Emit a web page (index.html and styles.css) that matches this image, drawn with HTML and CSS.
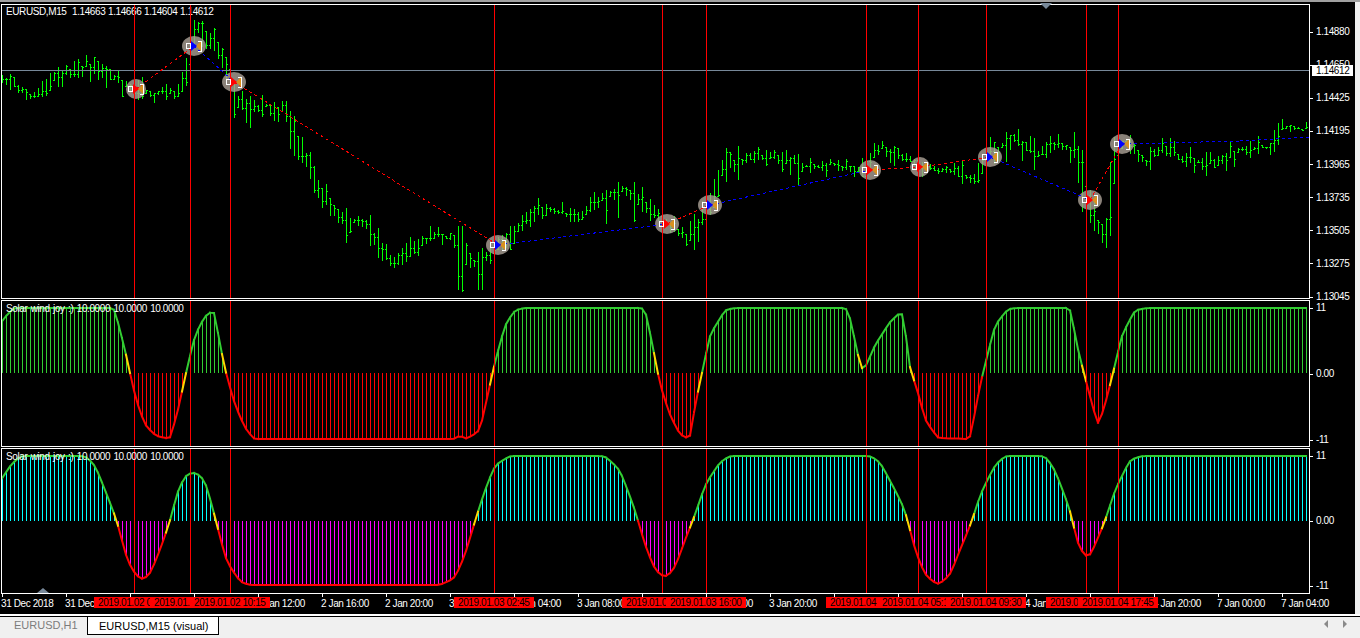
FILE: index.html
```html
<!DOCTYPE html>
<html lang="en">
<head>
<meta charset="utf-8">
<title>EURUSD,M15 (visual)</title>
<link rel="stylesheet" href="styles.css">
</head>
<body>
<div class="strip"></div>
<main class="terminal">
  <span class="shift shift-top"></span>
  <div class="row row-main">
    <section class="pane pane-main">
      <div class="legend"><span class="symbol">EURUSD,M15</span><span class="ohlc">1.14663</span><span class="ohlc">1.14666</span><span class="ohlc">1.14604</span><span class="ohlc">1.14612</span></div>
      <svg id="price" viewBox="2 5 1307 293" width="1307" height="293"></svg>
    </section>
    <div class="axis axis-main">
      <span class="tick">1.14880</span><span class="tick">1.14650</span><span class="tick">1.14425</span><span class="tick">1.14195</span><span class="tick">1.13965</span><span class="tick">1.13735</span><span class="tick">1.13505</span><span class="tick">1.13275</span><span class="tick">1.13045</span>
      <span class="price-tag">1.14612</span>
    </div>
  </div>
  <div class="row row-ind1">
    <section class="pane pane-ind1">
      <svg id="ind1" viewBox="2 301 1307 145" width="1307" height="145"></svg>
      <div class="legend">Solar wind joy :) 10.0000 10.0000 10.0000</div>
    </section>
    <div class="axis axis-ind1"><span class="tick">11</span><span class="tick">0.00</span><span class="tick">-11</span></div>
  </div>
  <div class="row row-ind2">
    <section class="pane pane-ind2">
      <svg id="ind2" viewBox="2 449 1307 144" width="1307" height="144"></svg>
      <div class="legend">Solar wind joy :) 10.0000 10.0000 10.0000</div>
    </section>
    <div class="axis axis-ind2"><span class="tick">11</span><span class="tick">0.00</span><span class="tick">-11</span></div>
  </div>
  <span class="shift shift-bottom"></span>
  <div class="timeline">
    <span class="time">31 Dec 2018</span><span class="time">31 Dec 20:00</span><span class="time">2 Jan 04:00</span><span class="time">2 Jan 08:00</span><span class="time">2 Jan 12:00</span><span class="time">2 Jan 16:00</span><span class="time">2 Jan 20:00</span><span class="time">3 Jan 00:00</span><span class="time">3 Jan 04:00</span><span class="time">3 Jan 08:00</span><span class="time">3 Jan 12:00</span><span class="time">3 Jan 16:00</span><span class="time">3 Jan 20:00</span><span class="time">4 Jan 00:00</span><span class="time">4 Jan 04:00</span><span class="time">4 Jan 08:00</span><span class="time">4 Jan 12:00</span><span class="time">4 Jan 16:00</span><span class="time">4 Jan 20:00</span><span class="time">7 Jan 00:00</span><span class="time">7 Jan 04:00</span>
    <span class="flag f134">2019.01.02 04:15</span>
    <span class="flag f190">2019.01.02 07:45</span>
    <span class="flag f230">2019.01.02 10:15</span>
    <span class="flag f494">2019.01.03 02:45</span>
    <span class="flag f662">2019.01.03 13:15</span>
    <span class="flag f706">2019.01.03 16:00</span>
    <span class="flag f866">2019.01.04 02:00</span>
    <span class="flag f918">2019.01.04 05:15</span>
    <span class="flag f986">2019.01.04 09:30</span>
    <span class="flag f1086">2019.01.04 15:45</span>
    <span class="flag f1118">2019.01.04 17:45</span>
  </div>
</main>
<nav class="tabs">
  <span class="tab">EURUSD,H1</span>
  <span class="tab tab-active">EURUSD,M15 (visual)</span>
  <span class="scroll scroll-left"></span>
  <span class="scroll scroll-right"></span>
</nav>
<script src="chart.js"></script>
</body>
</html>
```
FILE: styles.css
```css
* { box-sizing: border-box; }
html, body { margin: 0; padding: 0; }
body {
  width: 1360px;
  height: 638px;
  overflow: hidden;
  background: #f0f0f0;
  font-family: "Liberation Sans", Arial, sans-serif;
  font-size: 10px;
  letter-spacing: -0.4px;
  color: #fff;
}
.strip { height: 2px; background: #a0a0a0; }
.terminal {
  position: relative;
  width: 1355px;
  height: 612px;
  padding: 2px 0 0 1px;
  background: #000;
  overflow: hidden;
}
.row { display: flex; }
.row-ind1 { margin-top: 1px; }
.row-ind2 { margin-top: 1px; }
.pane {
  position: relative;
  width: 1309px;
  border: 1px solid #fff;
  flex: none;
}
.pane svg { position: relative; display: block; }
.pane-main { height: 295px; }
.pane-ind1 { height: 147px; }
.pane-ind2 { height: 146px; }
.legend {
  position: absolute;
  left: 4px;
  top: 2px;
  line-height: 12px;
  white-space: nowrap;
  word-spacing: 1px;
}
.pane-main .legend { top: 1px; }
.symbol { display: inline-block; width: 66px; }
.ohlc { display: inline-block; width: 36px; }
.axis {
  position: relative;
  display: flex;
  flex-direction: column;
  justify-content: space-between;
  flex: none;
  width: 44px;
}
.axis-main { height: 300px; margin-bottom: -6px; padding-top: 21px; }
.axis-ind1 { height: 147px; padding-top: 1px; }
.axis-ind2 { height: 146px; padding: 1px 0; }
.tick {
  display: flex;
  align-items: center;
  height: 14px;
  line-height: 14px;
}
.tick::before {
  content: "";
  width: 3px;
  height: 1px;
  margin: 0 3px 0 0;
  background: #fff;
}
.price-tag {
  position: absolute;
  left: 2px;
  top: 61px;
  width: 41px;
  height: 11px;
  line-height: 11px;
  padding-left: 4px;
  background: #fff;
  color: #000;
}
.shift { position: absolute; width: 0; height: 0; border-style: solid; border-color: transparent; }
.shift-top {
  left: 1040px;
  top: 1px;
  border-width: 6px 6px 0;
  border-top-color: #778899;
  z-index: 2;
}
.shift-bottom {
  left: 37px;
  top: 586px;
  border-width: 0 6px 5px;
  border-bottom-color: #778899;
  z-index: 2;
}
.timeline {
  position: relative;
  display: grid;
  grid-template-columns: repeat(21, 64px);
  width: 1353px;
  height: 19px;
  margin-left: 0;
}
.time {
  position: relative;
  padding: 3px 0 0 0;
  line-height: 14px;
  white-space: nowrap;
}
.time::before {
  content: "";
  position: absolute;
  left: 1px;
  top: 0;
  width: 1px;
  height: 3px;
  background: #fff;
}
.flag {
  position: absolute;
  top: 3px;
  width: 80px;
  height: 11px;
  padding-left: 4px;
  line-height: 11px;
  background: #f00;
  color: #000;
  overflow: hidden;
  white-space: nowrap;
}
.f134 { left: 93px; }
.f190 { left: 149px; }
.f230 { left: 189px; }
.f494 { left: 453px; }
.f662 { left: 621px; }
.f706 { left: 665px; }
.f866 { left: 825px; }
.f918 { left: 877px; }
.f986 { left: 945px; }
.f1086 { left: 1045px; }
.f1118 { left: 1077px; }
.tabs {
  position: relative;
  display: flex;
  align-items: flex-start;
  height: 24px;
  border-top: 2px solid #fff;
  font-size: 11px;
  letter-spacing: 0;
}
.tabs::before {
  content: "";
  position: absolute;
  left: 0;
  right: 0;
  top: 0;
  height: 1px;
  background: #000;
}
.tab {
  height: 18px;
  padding: 0 0 0 14px;
  width: 87px;
  line-height: 19px;
  color: #7c7c7c;
}
.tab-active {
  position: relative;
  width: 132px;
  height: 19px;
  padding-left: 11px;
  background: #fff;
  color: #000;
  border: 1px solid #000;
}
.scroll {
  width: 0;
  height: 0;
  margin-top: 4px;
  border-style: solid;
  border-color: transparent;
}
.scroll-left {
  margin-left: 1105px;
  border-width: 4px 4px 4px 0;
  border-right-color: #8a8a8a;
}
.scroll-right {
  margin-left: 15px;
  border-width: 4px 0 4px 4px;
  border-left-color: #8a8a8a;
}
```
FILE: chart.js
```js
(function () {
  var NS = 'http://www.w3.org/2000/svg';
  var LINES = [134, 190, 230, 494, 662, 706, 866, 918, 986, 1086, 1118];

  function add(svg, tag, attrs) {
    var el = document.createElementNS(NS, tag);
    for (var k in attrs) el.setAttribute(k, attrs[k]);
    svg.appendChild(el);
    return el;
  }
  function interp(pts, x) {
    if (x <= pts[0][0]) return pts[0][1];
    for (var i = 1; i < pts.length; i++) {
      if (x <= pts[i][0]) {
        var a = pts[i - 1], b = pts[i];
        return a[1] + (b[1] - a[1]) * (x - a[0]) / (b[0] - a[0]);
      }
    }
    return pts[pts.length - 1][1];
  }
  function rng(seed) {
    return function () {
      seed |= 0; seed = seed + 0x6D2B79F5 | 0;
      var t = Math.imul(seed ^ seed >>> 15, 1 | seed);
      t = t + Math.imul(t ^ t >>> 7, 61 | t) ^ t;
      return ((t ^ t >>> 14) >>> 0) / 4294967296;
    };
  }
  function redLines(svg, y0, y1) {
    var d = '';
    LINES.forEach(function (x) { d += 'M' + x + ' ' + y0 + 'h1V' + y1 + 'h-1z'; });
    add(svg, 'path', { d: d, fill: '#f00', 'shape-rendering': 'crispEdges' });
  }

  /* ---------- price pane ---------- */
  var path = [[2,82],[12,86],[22,90],[30,95],[42,90],[52,78],[62,74],[72,72],[86,65],[100,73],[115,81],[125,85],[135,90],[146,95],[160,93],[178,92],[184,76],[188,62],[192,34],[197,28],[205,32],[215,42],[224,60],[229,78],[236,100],[250,112],[265,106],[285,108],[295,140],[300,152],[312,172],[316,188],[330,205],[345,220],[365,225],[380,245],[390,258],[402,263],[415,245],[430,238],[450,237],[460,252],[470,265],[482,258],[500,240],[520,225],[538,205],[560,212],[578,217],[600,197],[620,186],[640,197],[655,215],[670,226],[690,235],[708,210],[722,170],[745,160],[770,153],[790,165],[800,165],[830,165],[860,170],[880,148],[900,155],[920,165],[950,172],[975,178],[990,150],[1015,140],[1035,155],[1055,143],[1075,150],[1082,185],[1095,220],[1108,232],[1112,165],[1118,148],[1125,142],[1145,160],[1165,148],[1185,160],[1215,162],[1240,148],[1270,145],[1280,128],[1308,129]];
  /* single long bars that stand out in the reference */
  var SPIKES = { 182:[72,92], 186:[58,86], 194:[20,46], 294:[116,156], 234:[84,118], 250:[96,128], 346:[208,243], 378:[228,258],
    458:[226,290], 462:[226,292], 478:[252,290], 482:[248,290], 510:[226,250], 606:[190,224], 618:[182,218], 634:[182,222],
    694:[214,250], 726:[148,182], 738:[146,180], 798:[154,186], 962:[160,184], 1082:[150,212], 1110:[162,236], 1006:[132,162], 1034:[138,170] };
  var price = document.getElementById('price');
  var MARKS = [
    [136,89,10,'#f00'],[194,46,12,'#00f'],[234,82,12,'#f00'],[498,245,12,'#00f'],
    [667,224,12,'#f00'],[710,205,12,'#00f'],[870,170,11,'#f00'],[920,167,10,'#f00'],
    [990,157,12,'#00f'],[1090,200,12,'#f00'],[1122,144,12,'#00f']
  ];
  var rand = rng(4711), bars = '', wob = 0, prevClose = null;
  for (var x = 2; x <= 1306; x += 4) {
    wob = wob * 0.6 + (rand() - 0.5) * 4;
    var c = interp(path, x) + wob;
    var slope = Math.abs(interp(path, x + 4) - interp(path, x - 4)) / 2;
    var r1 = rand(), r2 = rand();
    var up = 1 + r1 * r1 * r1 * 12 + slope * 0.9, dn = 1 + r2 * r2 * r2 * 12 + slope * 0.9;
    var top = Math.round(c - up), bot = Math.round(c + dn);
    if (SPIKES[x]) { top = SPIKES[x][0]; bot = SPIKES[x][1]; }
    var open = prevClose === null ? c : Math.max(top, Math.min(bot - 1, prevClose));
    var close = Math.round(top + rand() * (bot - top - 1));
    bars += 'M' + x + ' ' + top + 'h1V' + bot + 'h-1z';
    bars += 'M' + (x - 1) + ' ' + Math.round(open) + 'h1v1h-1z';
    bars += 'M' + (x + 1) + ' ' + close + 'h1v1h-1z';
    prevClose = close;
  }
  add(price, 'path', { d: bars, fill: '#0f0', 'shape-rendering': 'crispEdges' });
  MARKS.forEach(function (m) {
    add(price, 'ellipse', { cx: m[0], cy: m[1], rx: m[2], ry: 10, fill: '#a89f94', opacity: 0.82 });
  });
  add(price, 'rect', { x: 2, y: 70, width: 1307, height: 1, fill: '#778899' });
  var zig = [
    [[136,89],[194,46],'#f00'],[[194,46],[234,82],'#00f'],[[234,82],[498,245],'#f00'],
    [[498,245],[667,224],'#00f'],[[667,224],[710,205],'#f00'],[[710,205],[870,170],'#00f'],
    [[870,170],[920,167],'#f00'],[[920,167],[990,157],'#f00'],[[990,157],[1090,200],'#00f'],
    [[1090,200],[1122,144],'#f00'],[[1122,144],[1240,141],'#00f'],[[1240,141],[1309,137],'#00f']
  ];
  zig.forEach(function (z) {
    add(price, 'line', { x1: z[0][0], y1: z[0][1], x2: z[1][0], y2: z[1][1], stroke: z[2],
      'stroke-dasharray': '3 3', 'stroke-width': 1, 'shape-rendering': 'crispEdges' });
  });
  redLines(price, 5, 298);
  MARKS.forEach(function (m) {
    var g = add(price, 'g', { transform: 'translate(' + m[0] + ' ' + m[1] + ')' });
    add(g, 'rect', { x: -7.5, y: -2.5, width: 4, height: 5, fill: 'none', stroke: '#fff', 'shape-rendering': 'crispEdges' });
    add(g, 'path', { d: 'M2 0L7 -5V5z', fill: '#d8901e' });
    add(g, 'path', { d: 'M4 -5H7V5H4', fill: 'none', stroke: '#fff', 'stroke-width': 1, 'shape-rendering': 'crispEdges' });
    add(g, 'path', { d: 'M-3 -5L3 0L-3 5z', fill: m[3] });
  });

  /* ---------- indicator panes ---------- */
  function indicator(id, pts, zero, lo, hi, posColor, negColor, y0, y1, goldA, goldB, soft) {
    var svg = document.getElementById(id), raw = [], k;
    for (k = 2; k <= 1306; k += 4) raw.push(interp(pts, k));
    var ys = raw.map(function (v, i) {
      var a = raw[Math.max(0, i - 1)], b = raw[Math.min(raw.length - 1, i + 1)];
      return Math.max(hi, Math.min(lo, (a + b) * soft + v * (1 - 2 * soft)));
    });
    var pos = '', neg = '';
    ys.forEach(function (y, i) {
      var xx = 2 + i * 4, yy = Math.round(y);
      if (yy < zero) pos += 'M' + xx + ' ' + yy + 'h1V' + zero + 'h-1z';
      else if (yy > zero) neg += 'M' + xx + ' ' + zero + 'h1V' + yy + 'h-1z';
    });
    add(svg, 'path', { d: pos, fill: posColor, 'shape-rendering': 'crispEdges' });
    add(svg, 'path', { d: neg, fill: negColor, 'shape-rendering': 'crispEdges' });
    var seg = { '#32cd32': '', '#f00': '', '#ffd700': '' };
    for (var i = 1; i < ys.length; i++) {
      var a = ys[i - 1], b = ys[i], m = (a + b) / 2, col;
      var falling = b > a;
      if (falling && m > zero - goldA && m < zero + goldB) col = '#ffd700';
      else if (!falling && b !== a && m > zero - goldB && m < zero + goldA) col = '#ffd700';
      else col = m < zero ? '#32cd32' : '#f00';
      seg[col] += 'M' + (2 + (i - 1) * 4) + ' ' + a.toFixed(1) + 'L' + (2 + i * 4) + ' ' + b.toFixed(1);
    }
    Object.keys(seg).forEach(function (col) {
      add(svg, 'path', { d: seg[col], fill: 'none', stroke: col, 'stroke-width': 2, 'stroke-linecap': 'square' });
    });
    redLines(svg, y0, y1);
  }

  indicator('ind1', [[2,322],[6,316],[14,308],[114,308],[120,330],[125,350],[130,373],[136,400],[145,425],[156,436],[170,439],[178,410],[186,373],[195,335],[205,316],[214,310],[220,345],[226,373],[235,405],[245,428],[254,439],[454,439],[460,435],[466,439],[480,431],[487,398],[495,362],[505,325],[515,310],[525,308],[645,308],[655,358],[660,385],[670,415],[680,435],[690,439],[695,405],[702,373],[710,335],[725,310],[735,308],[848,308],[860,365],[863,373],[875,345],[890,322],[903,310],[910,370],[916,385],[925,420],[938,438],[970,439],[980,385],[985,365],[995,325],[1008,309],[1016,308],[1070,308],[1078,350],[1087,385],[1098,426],[1105,405],[1113,373],[1122,335],[1135,310],[1148,308],[1306,308]],
    373, 439, 308, '#32cd32', '#f00', 301, 446, 13, 3, 0.12);

  indicator('ind2', [[2,480],[8,468],[20,456],[85,456],[95,465],[105,490],[117,521],[127,560],[135,574],[142,580],[150,574],[160,550],[170,521],[178,490],[186,475],[195,472],[205,480],[216,521],[226,560],[240,582],[250,585],[440,585],[455,578],[465,555],[475,521],[485,490],[495,465],[510,456],[605,456],[620,470],[635,510],[645,545],[655,570],[665,578],[675,568],[685,540],[695,515],[705,485],[720,462],[730,456],[870,456],[880,462],[895,490],[905,510],[915,550],[925,575],[938,585],[950,575],[960,550],[972,521],[980,495],[995,465],[1005,456],[1045,456],[1055,470],[1070,510],[1078,545],[1088,560],[1095,545],[1105,521],[1115,490],[1130,460],[1142,456],[1306,456]],
    521, 586, 456, '#00ffff', '#ff00ff', 449, 593, 6, 3, 0.2);
})();
```
